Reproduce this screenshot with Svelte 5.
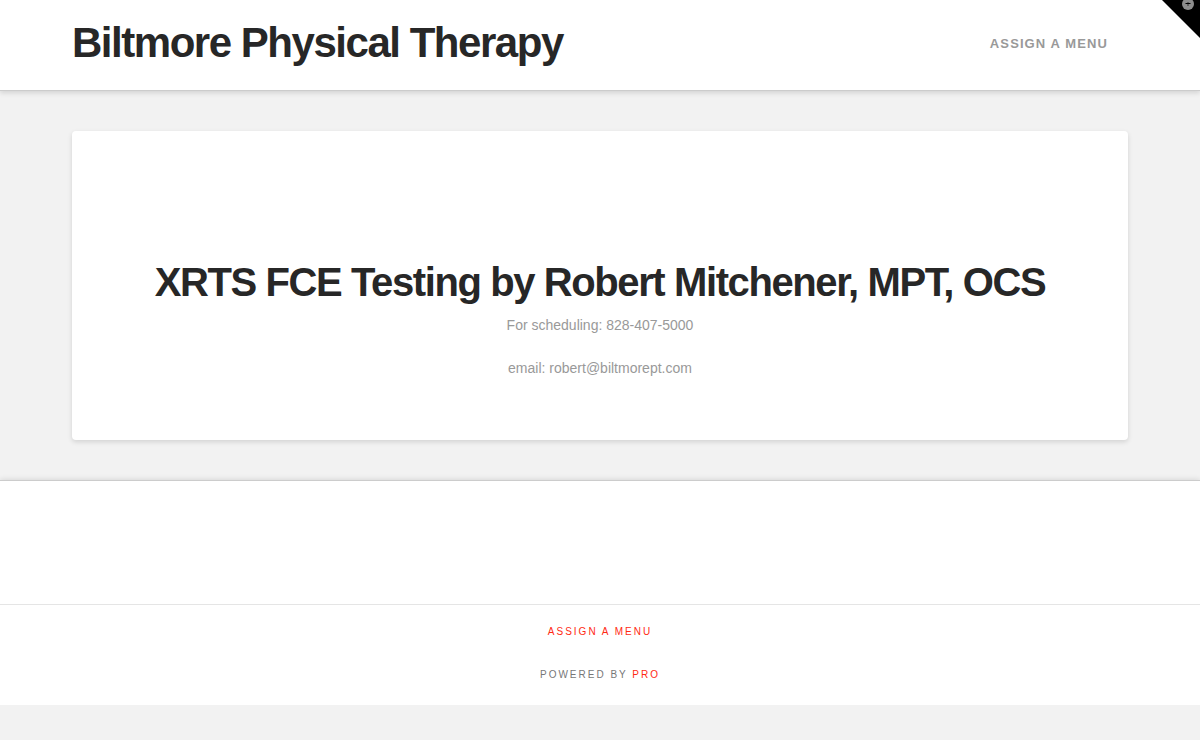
<script>
let siteName = 'Biltmore Physical Therapy';
let open = $state(false);
</script>

<svelte:head>
	<title>{siteName}</title>
</svelte:head>

<div class="site">
<header class="masthead">
  <div class="container bar">
    <a class="brand" href="/">{siteName}</a>
    <nav class="nav">
      <a href="/wp-admin/nav-menus.php">Assign a Menu</a>
    </nav>
  </div>
</header>

<button class="toggle" aria-label="Toggle the Widgetbar" aria-expanded={open} onclick={() => open = !open}>
  <svg viewBox="0 0 12 12" width="12" height="12" aria-hidden="true">
    <circle cx="6" cy="6" r="6" fill="#8c8c8c" />
    <path d="M6 4v4" stroke="#333" stroke-width="1" />
    <path d="M3.5 5.5h5" stroke="#000" stroke-width="1" />
  </svg>
</button>

<main class="container">
  <article class="entry">
    <h1>XRTS FCE Testing by Robert Mitchener, MPT, OCS</h1>
    <p>For scheduling: 828-407-5000</p>
    <p>email: robert@biltmorept.com</p>
  </article>
</main>

<footer class="widgets"></footer>
<footer class="colophon">
  <a href="/wp-admin/nav-menus.php">Assign a Menu</a>
  <p>Powered by <a href="https://theme.co/pro/">Pro</a></p>
</footer>
</div>

<style>
:global(body) {
  margin: 0;
  background: #f2f2f2;
}

.site {
  position: relative;
  overflow: hidden;
  font-family: "Liberation Sans", Arial, sans-serif;
  font-size: 14px;
  line-height: 24px;
  color: #999;
}

a {
  text-decoration: none;
}

.container {
  width: 88%;
  max-width: 1200px;
  margin: 0 auto;
}

.masthead {
  background: white;
  border-bottom: 1px solid #ccc;
  box-shadow: 0 2px 5px rgba(0,0,0,0.135);
}

.bar {
  display: flex;
  justify-content: space-between;
  align-items: center;
  padding: 22px 0 26px;
}

.brand {
  color: #272727;
  font-size: 42px;
  font-weight: bold;
  line-height: 42px;
  letter-spacing: -0.035em;
}

.nav a {
  color: #999;
  font-size: 13px;
  font-weight: bold;
  letter-spacing: 0.085em;
  text-transform: uppercase;
  padding: 0 20px;
}

.toggle {
  position: absolute;
  top: 0;
  right: 0;
  width: 38px;
  height: 38px;
  padding: 0;
  border: 0;
  background: black;
  clip-path: polygon(0 0, 100% 0, 100% 100%);
  cursor: pointer;
}

.toggle svg {
  position: absolute;
  top: -2px;
  right: 6px;
}

.entry {
  margin: 40px 0;
  padding: 127px 36px 60px;
  background: white;
  border-radius: 4px;
  box-shadow: 0 2px 5px rgba(0,0,0,0.135);
  text-align: center;
}

h1 {
  margin: 0 0 7px;
  color: #272727;
  font-size: 40px;
  line-height: 48px;
  letter-spacing: -0.035em;
}

.entry p {
  margin: 0 0 19px;
}

.entry p:last-child {
  margin: 0;
}

.widgets {
  min-height: 123px;
  background: white;
  border-top: 1px solid #ccc;
  box-shadow: 0 -1px 5px rgba(0,0,0,0.1);
}

.colophon {
  position: relative;
  padding: 15px 0 18px;
  background: white;
  border-top: 1px solid #e5e5e5;
  font-size: 10px;
  letter-spacing: 2px;
  text-align: center;
  text-transform: uppercase;
  color: #777;
}

.colophon a {
  color: #ff2a13;
}

.colophon p {
  margin: 19px 0 0;
}
</style>
